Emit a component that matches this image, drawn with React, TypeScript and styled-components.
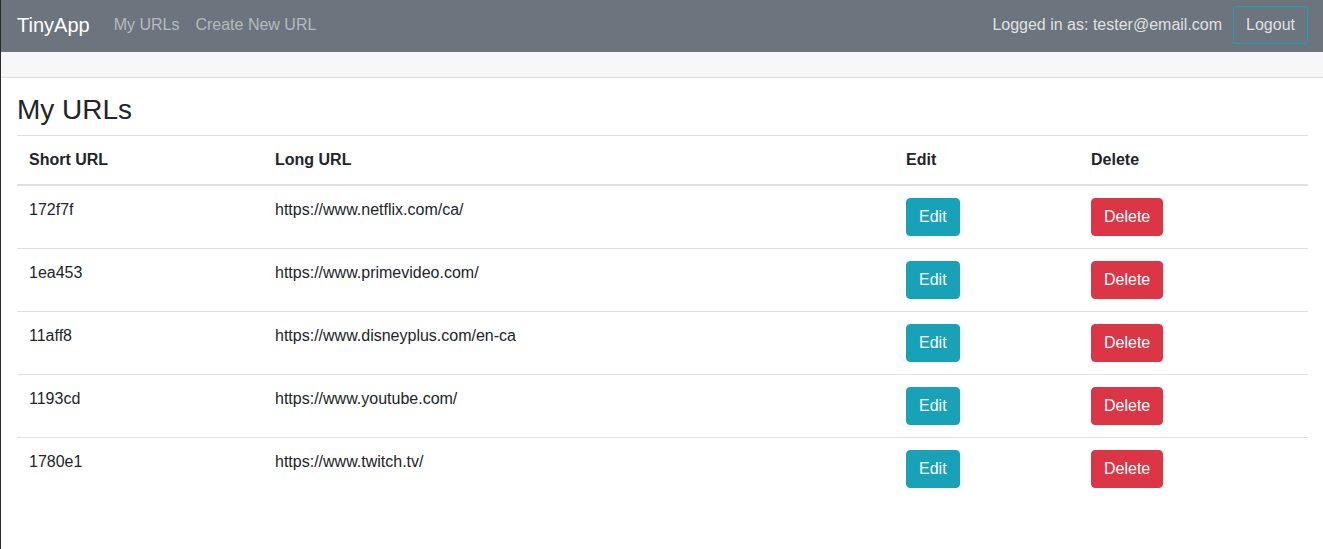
import React from "react";
import styled, { createGlobalStyle } from "styled-components";

const Global = createGlobalStyle`
  html, body { margin: 0; padding: 0; background: #fff; }
  body {
    font-family: "Liberation Sans", Arial, sans-serif;
    font-size: 16px;
    line-height: 1.5;
    color: #212529;
  }
  * { box-sizing: border-box; }
`;

const Page = styled.div`
  min-height: 100vh;
  border-left: 1px solid #2a2a2a;
`;

const Navbar = styled.nav`
  height: 52px;
  background: #6c757d;
  padding: 0 15px 2px 16px;
  display: flex;
  align-items: center;
  justify-content: space-between;
`;

const Left = styled.div`
  display: flex;
  align-items: center;
`;

const Brand = styled.a`
  font-size: 20px;
  line-height: 30px;
  color: #fff;
  margin-right: 16px;
  text-decoration: none;
`;

const NavLink = styled.a`
  color: rgba(255, 255, 255, 0.5);
  padding: 8px;
  text-decoration: none;
`;

const Right = styled.div`
  display: flex;
  align-items: center;
  gap: 11px;
`;

const User = styled.span`
  color: rgba(255, 255, 255, 0.8);
`;

const OutlineButton = styled.button`
  font: inherit;
  color: rgba(255, 255, 255, 0.8);
  background: transparent;
  border: 1px solid #17a2b8;
  border-radius: 4px;
  padding: 6px 12px;
  line-height: 24px;
`;

const Strip = styled.div`
  height: 26px;
  background: #f7f7f7;
  border-bottom: 1px solid #dcdcdc;
`;

const Main = styled.main`
  padding: 15px 14px 0 16px;
`;

const Title = styled.h3`
  margin: 0 0 8px;
  font-size: 28px;
  font-weight: 500;
  line-height: 1.2;
`;

const Table = styled.table`
  width: 1291px;
  border-collapse: collapse;
  table-layout: fixed;
`;

const Th = styled.th<{ $w: number }>`
  width: ${(p) => p.$w}px;
  text-align: left;
  font-weight: 700;
  padding: 12px;
  border-top: 1px solid #dee2e6;
  border-bottom: 2px solid #dee2e6;
  vertical-align: bottom;
`;

const Td = styled.td`
  padding: 12px;
  border-top: 1px solid #dee2e6;
  vertical-align: top;
`;

const ActionButton = styled.button<{ $kind: "info" | "danger" }>`
  font: inherit;
  color: #fff;
  background: ${(p) => (p.$kind === "info" ? "#17a2b8" : "#dc3545")};
  border: 1px solid ${(p) => (p.$kind === "info" ? "#17a2b8" : "#dc3545")};
  border-radius: 4px;
  padding: 6px 12px;
  line-height: 24px;
`;

const rows = [
  ["172f7f", "https://www.netflix.com/ca/"],
  ["1ea453", "https://www.primevideo.com/"],
  ["11aff8", "https://www.disneyplus.com/en-ca"],
  ["1193cd", "https://www.youtube.com/"],
  ["1780e1", "https://www.twitch.tv/"],
];

export default function App() {
  return (
    <Page>
      <Global />
      <Navbar>
        <Left>
          <Brand href="#">TinyApp</Brand>
          <NavLink href="#">My URLs</NavLink>
          <NavLink href="#">Create New URL</NavLink>
        </Left>
        <Right>
          <User>Logged in as: tester@email.com</User>
          <OutlineButton>Logout</OutlineButton>
        </Right>
      </Navbar>
      <Strip />
      <Main>
        <Title>My URLs</Title>
        <Table>
          <thead>
            <tr>
              <Th $w={246}>Short URL</Th>
              <Th $w={631}>Long URL</Th>
              <Th $w={185}>Edit</Th>
              <Th $w={229}>Delete</Th>
            </tr>
          </thead>
          <tbody>
            {rows.map(([s, l]) => (
              <tr key={s}>
                <Td>{s}</Td>
                <Td>{l}</Td>
                <Td>
                  <ActionButton $kind="info">Edit</ActionButton>
                </Td>
                <Td>
                  <ActionButton $kind="danger">Delete</ActionButton>
                </Td>
              </tr>
            ))}
          </tbody>
        </Table>
      </Main>
    </Page>
  );
}
